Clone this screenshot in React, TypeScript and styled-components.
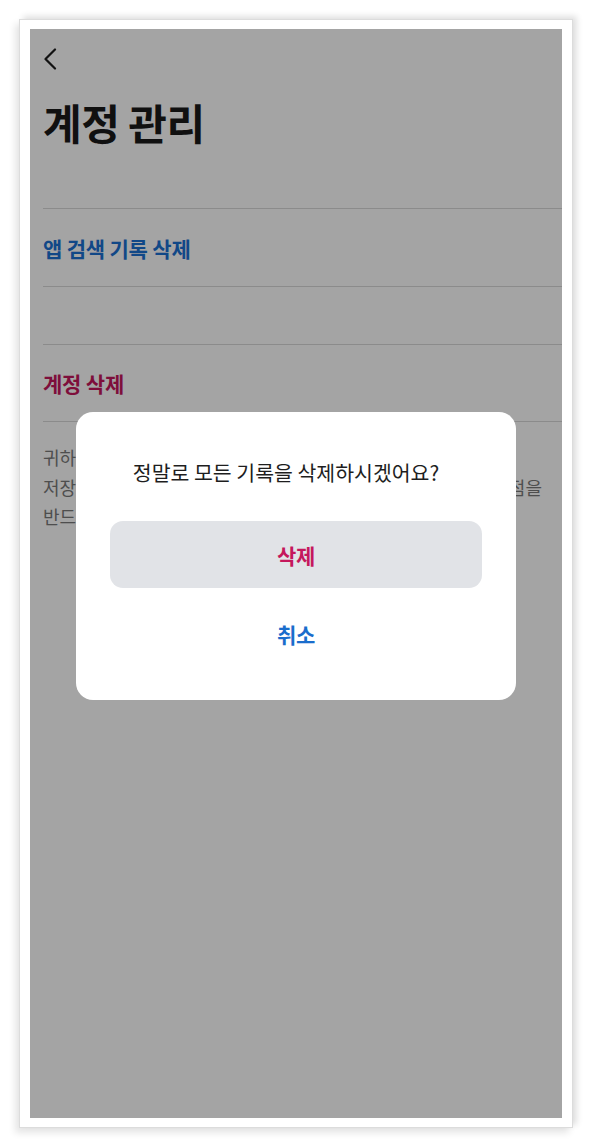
import React from "react";
import styled, { createGlobalStyle } from "styled-components";

const Global = createGlobalStyle`
  html, body { margin: 0; padding: 0; background: #ffffff; }
  body { font-family: "Noto Sans CJK KR", "Noto Sans", sans-serif; }
  * { box-sizing: border-box; }
`;

const Page = styled.div`
  width: 592px;
  height: 1148px;
  padding: 19px 0 0 19px;
  background: #ffffff;
`;

const Frame = styled.div`
  width: 554px;
  height: 1109px;
  padding: 9px 10px 9px 10px;
  background: #ffffff;
  border: 1px solid #dcdcdc;
  box-shadow: 4px -3px 6px rgba(0, 0, 0, 0.12), -4px 5px 7px rgba(0, 0, 0, 0.1);
`;

const Screen = styled.div`
  position: relative;
  width: 532px;
  height: 1089px;
  background: #ffffff;
  overflow: hidden;
`;

const Content = styled.div`
  display: flex;
  flex-direction: column;
  padding-left: 13px;
`;

const BackButton = styled.div`
  display: flex;
  align-items: center;
  margin-top: 19px;
  height: 21px;
  color: #1c1c1c;
`;

const Title = styled.h1`
  margin: 28px 0 0 0;
  height: 50px;
  line-height: 50px;
  font-size: 42px;
  font-weight: 700;
  letter-spacing: -0.5px;
  color: #1a1a1a;
`;

const Divider = styled.div<{ $top?: number }>`
  height: 1px;
  margin-top: ${(p) => p.$top ?? 0}px;
  background: #d9d9d9;
`;

const Row = styled.div<{ $h: number; $color?: string }>`
  display: flex;
  align-items: center;
  height: ${(p) => p.$h}px;
  font-size: 21px;
  font-weight: 700;
  letter-spacing: -0.2px;
  color: ${(p) => p.$color ?? "#1b70d2"};
`;

const Body = styled.div`
  display: flex;
  flex-direction: column;
  margin-top: 21px;
  padding-right: 20px;
  font-size: 18px;
  line-height: 29.5px;
  color: #7a7a7a;
`;

const BodyLine = styled.span<{ $full?: boolean }>`
  display: block;
  white-space: nowrap;
  text-align: ${(p) => (p.$full ? "justify" : "left")};
  text-align-last: ${(p) => (p.$full ? "justify" : "left")};
`;

const Overlay = styled.div`
  position: absolute;
  inset: 0;
  background: rgba(0, 0, 0, 0.358);
  display: flex;
  justify-content: center;
  align-items: flex-start;
  padding-top: 383px;
`;

const Dialog = styled.div`
  width: 440px;
  height: 288px;
  background: #ffffff;
  border-radius: 17px;
  padding: 48px 34px 0 34px;
  display: flex;
  flex-direction: column;
`;

const DialogTitle = styled.div`
  height: 24px;
  line-height: 24px;
  padding-right: 20px;
  text-align: center;
  font-size: 20.5px;
  font-weight: 400;
  color: #1e1e1e;
  white-space: nowrap;
`;

const Actions = styled.div`
  display: flex;
  flex-direction: column;
  gap: 12px;
  margin-top: 37px;
`;

const ActionButton = styled.button<{ $variant: "danger" | "plain" }>`
  height: 67px;
  border: none;
  border-radius: 13px;
  background: ${(p) => (p.$variant === "danger" ? "#e1e3e7" : "transparent")};
  color: ${(p) => (p.$variant === "danger" ? "#c5175c" : "#1a6dcc")};
  font-family: "Noto Sans CJK KR", "Noto Sans", sans-serif;
  font-size: 21px;
  font-weight: 700;
  letter-spacing: -0.3px;
  cursor: pointer;
`;

const ChevronLeft = () => (
  <svg width="14" height="22" viewBox="0 0 14 22" fill="none">
    <polyline
      points="12,1.5 2.5,11 12,20.5"
      stroke="currentColor"
      strokeWidth="2.2"
      strokeLinecap="round"
      strokeLinejoin="round"
    />
  </svg>
);

export default function App() {
  return (
    <>
      <Global />
      <Page>
        <Frame>
          <Screen>
            <Content>
              <BackButton>
                <ChevronLeft />
              </BackButton>
              <Title>계정 관리</Title>
              <Divider $top={61} />
              <Row $h={77}>앱 검색 기록 삭제</Row>
              <Divider />
              <Row $h={57} />
              <Divider />
              <Row $h={76} $color="#c5175c">
                계정 삭제
              </Row>
              <Divider />
              <Body>
                <BodyLine>귀하의 계정을 삭제하면 모든 정보가 즉시 삭제되며,</BodyLine>
                <BodyLine $full>저장된 데이터와 이용 기록은 모두 다시 복구할 수 없는 점을</BodyLine>
                <BodyLine>반드시 확인해 주시기 바랍니다.</BodyLine>
              </Body>
            </Content>
            <Overlay>
              <Dialog>
                <DialogTitle>정말로 모든 기록을 삭제하시겠어요?</DialogTitle>
                <Actions>
                  <ActionButton $variant="danger">삭제</ActionButton>
                  <ActionButton $variant="plain">취소</ActionButton>
                </Actions>
              </Dialog>
            </Overlay>
          </Screen>
        </Frame>
      </Page>
    </>
  );
}
